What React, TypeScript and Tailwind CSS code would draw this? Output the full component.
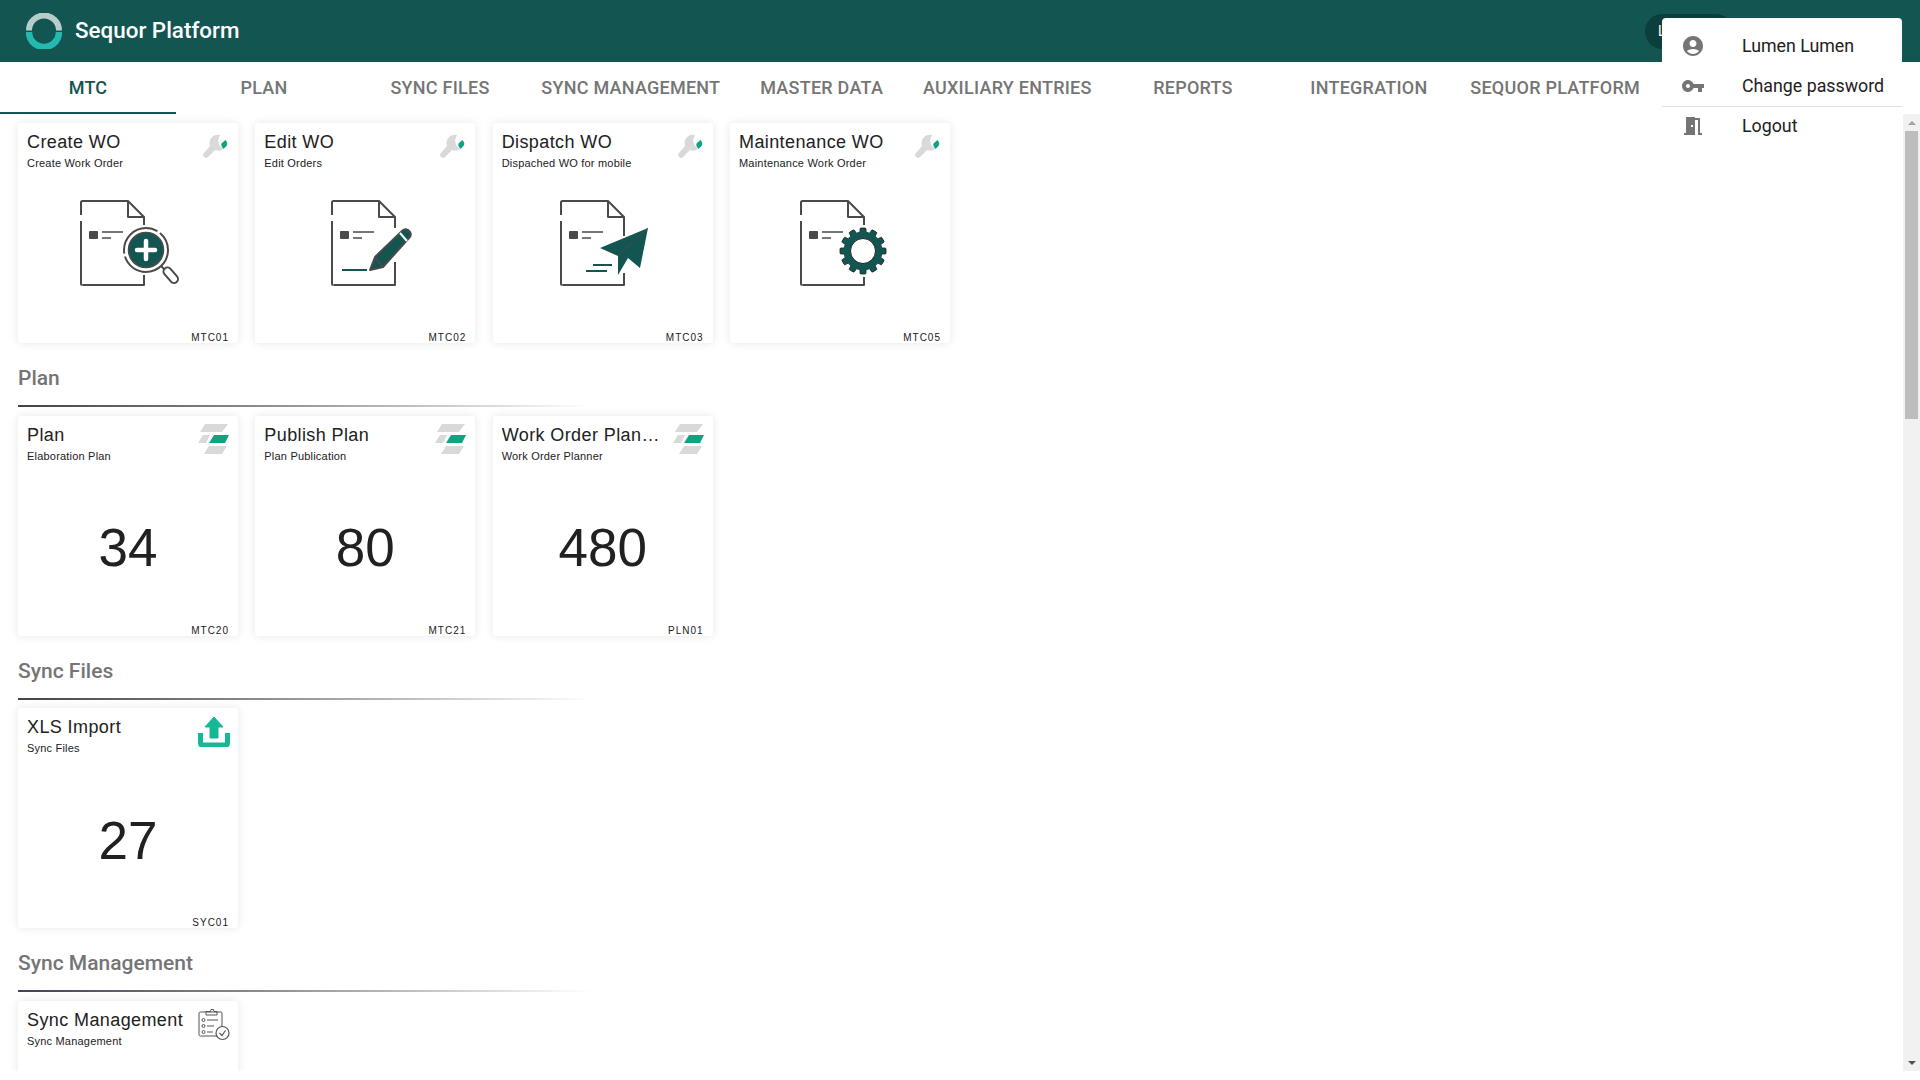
import type { ReactNode } from "react";

const TEAL = "#125551";
const INK = "#4a4a4a";

const tabs = [
  { label: "MTC", active: true },
  { label: "Plan" },
  { label: "Sync Files" },
  { label: "Sync Management" },
  { label: "Master Data" },
  { label: "Auxiliary Entries" },
  { label: "Reports" },
  { label: "Integration" },
  { label: "Sequor Platform" },
];

// document outline shared by the four work order pictures
function Doc({ x, right, children }: { x: number; right: string; children: ReactNode }) {
  return (
    <svg width="110" height="100" viewBox="0 0 110 100" fill="none">
      <g transform={`translate(${x} 8)`}>
        <path
          d={`M0 14V1.5Q0 0 1.5 0H47L63 16${right}`}
          stroke={INK}
          strokeWidth="2"
          strokeLinejoin="round"
        />
        <path d="M0 20V82.5Q0 84 1.5 84" stroke={INK} strokeWidth="2" />
        <path d="M47 0V16H63" stroke={INK} strokeWidth="2" strokeLinejoin="round" />
        <rect x="8" y="30" width="9" height="8" rx="1" fill={INK} />
        <path d="M21 31H42M21 37H30" stroke={INK} strokeWidth="1.5" />
        {children}
      </g>
    </svg>
  );
}

function CreatePic() {
  return (
    <Doc x={8} right="V24M63 74V84H1.5">
      <circle cx="65" cy="49" r="22" fill="#fff" stroke={INK} strokeWidth="2" strokeDasharray="62 3 50 3 20" />
      <circle cx="65" cy="49" r="17.5" fill={TEAL} stroke={INK} strokeWidth="1.500" />
      <path d="M65 40V58M56 49H74" stroke="#fff" strokeWidth="4.500" strokeLinecap="round" />
      <path d="M80 65L84 69" stroke={INK} strokeWidth="2" />
      <path d="M86.500 70.500L93 78" stroke={INK} strokeWidth="10" strokeLinecap="round" />
      <path d="M86.500 70.500L93 78" stroke="#fff" strokeWidth="6" strokeLinecap="round" />
    </Doc>
  );
}

function EditPic() {
  return (
    <Doc x={22} right="V27M63 61V84H1.5">
      <path
        d="M38 69L43 56L70 30Q73 27 76 29L78 31Q80 34 77 37L51 66Z"
        fill={TEAL}
        stroke={INK}
        strokeWidth="2"
        strokeLinejoin="round"
      />
      <path d="M68 32L75 40" stroke="#fff" strokeWidth="2" />
      <path d="M43 56L51 66" stroke={INK} strokeWidth="2" />
      <path d="M10 69H35" stroke={TEAL} strokeWidth="2" />
    </Doc>
  );
}

function DispatchPic() {
  return (
    <Doc x={13} right="V35M63 72V84H1.5">
      <path d="M87 27L39 47L57 55V74L67 57L79 67Z" fill={TEAL} />
      <path d="M57 55L87 27" stroke={INK} strokeWidth="1" />
      <path d="M32 64H51M25 70H46" stroke={TEAL} strokeWidth="2" />
    </Doc>
  );
}

function MaintenancePic() {
  const teeth = [0, 30, 60, 90, 120, 150, 180, 210, 240, 270, 300, 330];
  return (
    <Doc x={16} right="V24M63 76V84H1.5">
      <g transform="translate(62 50)">
        {teeth.map((a) => (
          <rect
            key={a}
            x="-3"
            y="-23"
            width="6"
            height="7"
            rx="1"
            fill={TEAL}
            stroke="#222"
            strokeWidth="0.8"
            transform={`rotate(${a})`}
          />
        ))}
        <circle r="19.500" fill={TEAL} />
        <circle r="12.500" fill="#fff" stroke="#222" strokeWidth="1" />
      </g>
    </Doc>
  );
}

function WrenchIcon() {
  return (
    <svg width="26" height="26" viewBox="0 0 26 26" fill="none" className="mt-[3px]">
      <path
        d="M18 1Q11 0 8 6Q7 9 8 12L1.500 19.500Q0.500 21 1.500 22.500L3 23.500Q4.500 24.500 6 23L13 16Q18 17.500 21 15L17 11L16 6Z"
        fill="#d9d9d9"
      />
      <path d="M23.500 6Q26.500 9.500 24.500 12L21.500 15Q18 11 20 9Z" fill="#0fa37f" />
    </svg>
  );
}

function PlanIcon() {
  return (
    <svg width="32" height="32" viewBox="0 0 32 32" className="mr-[-2px]">
      <path d="M7 0H30L24 8H2Z" fill="#d9d9d9" />
      <path d="M5 11H12L8 19H0Z" fill="#d9d9d9" />
      <path d="M16 11H31L27 19H11Z" fill="#0fa37f" />
      <path d="M11 22H29L24 30H6Z" fill="#d9d9d9" />
    </svg>
  );
}

function UploadIcon() {
  return (
    <svg width="32" height="32" viewBox="0 0 32 32" fill="none" className="mt-[-1px] mr-[-2px]">
      <path d="M16 2L7 12H12V23H20V12H25Z" fill="#14b897" stroke="#14b897" strokeWidth="1" strokeLinejoin="round" />
      <path d="M2.500 18V28Q2.500 30 4.500 30H27.500Q29.500 30 29.500 28V18" stroke="#14b897" strokeWidth="5" strokeLinejoin="round" />
    </svg>
  );
}

function ClipboardIcon() {
  return (
    <svg width="32" height="32" viewBox="0 0 32 32" fill="none" stroke="#555" strokeWidth="1" className="mr-[-2px]">
      <path d="M19 27H2.500Q1 27 1 25.500V4Q1 3 2.500 3H23Q24 3 24 4V18" />
      <path d="M8 4V2.500H12.500L13 0.500L15.500 0.500L16 2.500H19V6H8Z" />
      <circle cx="5.500" cy="11" r="1.500" />
      <circle cx="5.500" cy="17" r="1.500" />
      <circle cx="5.500" cy="23" r="1.500" />
      <path d="M9 11H20M9 17H16M9 23H15" />
      <circle cx="24.500" cy="24" r="6.500" strokeWidth="1.200" />
      <path d="M21.500 24L24 26.500L27.500 21.500" strokeWidth="1.200" />
    </svg>
  );
}

function Logo() {
  return (
    <svg width="36" height="36" viewBox="0 0 36 36" fill="none">
      <path d="M3 17.500A15 15 0 0 1 33 17.500" stroke="#b7cdcb" strokeWidth="6" />
      <path d="M3 19A15 15 0 0 0 33 19" stroke="#25b8b0" strokeWidth="6.500" />
    </svg>
  );
}

function MenuIcon({ d }: { d: string }) {
  return (
    <svg width="24" height="24" viewBox="0 0 24 24" fill="#757575">
      <path d={d} />
    </svg>
  );
}

function Card({
  title,
  sub,
  code,
  icon,
  value,
  pic,
}: {
  title: string;
  sub: string;
  code?: string;
  icon: ReactNode;
  value?: string;
  pic?: ReactNode;
}) {
  return (
    <div className="w-[220px] h-[220px] shrink-0 rounded-[3px] bg-white shadow-[0_0_10px_rgba(0,0,0,0.1)] flex flex-col font-['Liberation_Sans',sans-serif]">
      <div className="h-[60px] shrink-0 flex justify-between pl-[9px] pr-[10px] pt-[8px]">
        <div className="min-w-0">
          <div className="w-[163px] truncate text-[18px] leading-[22px] tracking-[0.4px] text-[#212121]">{title}</div>
          <div className="mt-[3px] text-[11px] leading-[14px] tracking-[0.2px] text-[#212121]">{sub}</div>
        </div>
        <div className="shrink-0">{icon}</div>
      </div>
      <div className="flex-1 flex justify-center">
        {pic ? (
          <div className="pt-[10px]">{pic}</div>
        ) : (
          <div className="self-center mt-[4px] text-[53px] leading-none text-[#212121]">{value}</div>
        )}
      </div>
      {code && (
        <div className="h-[20px] shrink-0 pr-[9px] pt-[8px] text-right text-[10px] leading-[14px] tracking-[1px] text-[#212121]">
          {code}
        </div>
      )}
    </div>
  );
}

function Section({ title }: { title: string }) {
  return (
    <div className="mt-[23px] mb-[8.6px]">
      <div className="h-6 text-[21px] leading-6 font-medium text-[#757575]">{title}</div>
      <div className="mt-[15px] h-[2px] w-[574px] bg-gradient-to-r from-[#424250] via-[#9a9a9f] to-transparent" />
    </div>
  );
}

export default function App() {
  return (
    <div className="relative h-[1080px] overflow-hidden bg-white font-['Roboto',sans-serif]">
      <header className="h-[62px] bg-[#125551] flex items-center pl-[26px] pr-[187px]">
        <Logo />
        <div className="ml-[13px] text-[22.4px] font-medium text-white">Sequor Platform</div>
        <div className="ml-auto h-[35px] w-[88px] rounded-full bg-[#0c3e3b] pl-[13px] text-[14px] leading-[35px] text-white">
          Lumen
        </div>
      </header>

      <nav className="h-[52px] flex">
        {tabs.map((t) => (
          <div
            key={t.label}
            className={
              t.active
                ? "min-w-[176px] px-[13.3px] flex items-center justify-center border-b-2 border-[#125551] text-[18px] font-medium uppercase tracking-[0.25px] text-[#125551]"
                : "min-w-[176px] px-[13.3px] pb-[2px] flex items-center justify-center text-[18px] font-medium uppercase tracking-[0.25px] text-[#757575]"
            }
          >
            {t.label}
          </div>
        ))}
      </nav>

      <div className="h-[957px] flex">
        <main className="flex-1 overflow-hidden pl-[18px] pt-[9px]">
          <div className="flex gap-[17.33px]">
            <Card title="Create WO" sub="Create Work Order" code="MTC01" icon={<WrenchIcon />} pic={<CreatePic />} />
            <Card title="Edit WO" sub="Edit Orders" code="MTC02" icon={<WrenchIcon />} pic={<EditPic />} />
            <Card title="Dispatch WO" sub="Dispached WO for mobile" code="MTC03" icon={<WrenchIcon />} pic={<DispatchPic />} />
            <Card title="Maintenance WO" sub="Maintenance Work Order" code="MTC05" icon={<WrenchIcon />} pic={<MaintenancePic />} />
          </div>

          <Section title="Plan" />
          <div className="flex gap-[17.33px]">
            <Card title="Plan" sub="Elaboration Plan" code="MTC20" icon={<PlanIcon />} value="34" />
            <Card title="Publish Plan" sub="Plan Publication" code="MTC21" icon={<PlanIcon />} value="80" />
            <Card title="Work Order Planner" sub="Work Order Planner" code="PLN01" icon={<PlanIcon />} value="480" />
          </div>

          <Section title="Sync Files" />
          <Card title="XLS Import" sub="Sync Files" code="SYC01" icon={<UploadIcon />} value="27" />

          <Section title="Sync Management" />
          <Card title="Sync Management" sub="Sync Management" icon={<ClipboardIcon />} />
        </main>

        {/* page scrollbar */}
        <div className="w-[17px] shrink-0 bg-[#f1f1f1] flex flex-col items-center">
          <div className="h-[17px] flex items-center justify-center">
            <div className="border-x-[4px] border-b-[4px] border-x-transparent border-b-[#a3a3a3]" />
          </div>
          <div className="h-[288px] w-[13px] bg-[#bdbdbd]" />
          <div className="mt-auto h-[17px] flex items-center justify-center">
            <div className="border-x-[4px] border-t-[4px] border-x-transparent border-t-[#505050]" />
          </div>
        </div>
      </div>

      {/* user menu, open over the header */}
      <div className="absolute left-[1662px] top-[18px] w-[240px] rounded-[4px] bg-white py-2 text-[17.8px] text-[#212121]">
        <div className="h-10 flex items-center pl-[19px]">
          <MenuIcon d="M12 2C6.48 2 2 6.48 2 12s4.48 10 10 10 10-4.48 10-10S17.52 2 12 2zm0 4c1.93 0 3.500 1.570 3.500 3.500S13.930 13 12 13s-3.500-1.570-3.500-3.500S10.070 6 12 6zm0 14c-2.030 0-4.430-.820-6.140-2.880C7.550 15.800 9.680 15 12 15s4.450.800 6.140 2.120C16.430 19.180 14.030 20 12 20z" />
          <span className="ml-[37px]">Lumen Lumen</span>
        </div>
        <div className="h-10 flex items-center pl-[19px] shadow-[0_1px_0_#e0e0e0]">
          <MenuIcon d="M12.650 10C11.830 7.670 9.610 6 7 6c-3.310 0-6 2.690-6 6s2.690 6 6 6c2.610 0 4.830-1.670 5.650-4H17v4h4v-4h2v-4H12.650zM7 14c-1.100 0-2-.900-2-2s.900-2 2-2 2 .900 2 2-.900 2-2 2z" />
          <span className="ml-[37px]">Change password</span>
        </div>
        <div className="h-10 flex items-center pl-[19px]">
          <MenuIcon d="M14 6v15H3v-2h2V3h9v1h5v15h2v2h-4V6h-3zm-4 5v2h2v-2h-2z" />
          <span className="ml-[37px]">Logout</span>
        </div>
      </div>
    </div>
  );
}
